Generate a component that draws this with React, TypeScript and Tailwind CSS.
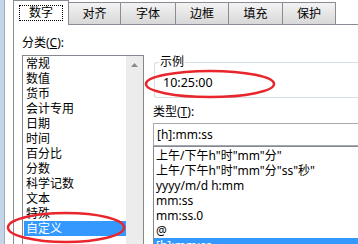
export default function App() {
  const tabs = [
    { label: "对齐", cls: "w-[52px]" },
    { label: "字体", cls: "w-[55px]" },
    { label: "边框", cls: "w-[53px]" },
    { label: "填充", cls: "w-[54px]" },
    { label: "保护", cls: "w-[53px]" },
  ];
  const cats = ["常规", "数值", "货币", "会计专用", "日期", "时间", "百分比", "分数", "科学记数", "文本", "特殊", "自定义"];
  const types = ['上午/下午h"时"mm"分"', '上午/下午h"时"mm"分"ss"秒"', "yyyy/m/d h:mm", "mm:ss", "mm:ss.0", "@", "[h]:mm:ss"];

  return (
    <div className="relative w-[358px] h-[244px] overflow-hidden bg-white text-[12px] text-black font-['Noto_Sans','Noto_Sans_CJK_SC',sans-serif] flex">
      <div className="w-[4px] shrink-0 bg-[#c4d5ea]" />
      <div className="w-px shrink-0 bg-[#a4abb6]" />
      <div className="w-[8px] shrink-0 bg-white" />
      <div className="flex-1 flex flex-col min-w-0">
        {/* tab row */}
        <div className="h-[25px] flex items-end shrink-0">
          <div className="w-[56px] h-[25px] shrink-0 bg-white border-l border-t border-r border-[#898c95] flex items-start justify-center pt-[4px]">
            <div className="border border-dotted border-black px-[9px] leading-[14px] h-[16px]">数字</div>
          </div>
          {tabs.map((t) => (
            <div
              key={t.label}
              className={`${t.cls} h-[23px] shrink-0 border-t border-r border-b border-[#898c95] bg-linear-to-b from-[#f3f3f3] to-[#d8d8d8] flex items-center justify-center leading-[14px]`}
            >
              {t.label}
            </div>
          ))}
          <div className="flex-1 h-[25px] border-b border-[#898c95]" />
        </div>
        {/* panel body */}
        <div className="flex-1 border-l border-[#898c95] pl-[8px] flex gap-[9px]">
          {/* left column */}
          <div className="w-[122px] shrink-0 flex flex-col">
            <div className="mt-[11px] leading-[14px] h-[14px]">
              分类(<span className="underline underline-offset-1">C</span>):
            </div>
            <div className="mt-[5px] h-[200px] border border-[#828790] flex">
              <div className="flex-1 flex flex-col pl-px">
                {cats.map((c) => (
                  <div
                    key={c}
                    className={
                      c === "自定义"
                        ? "h-[15px] leading-[15px] pl-[2px] bg-[#3399ff] text-white"
                        : "h-[15px] leading-[15px] pl-[2px]"
                    }
                  >
                    {c}
                  </div>
                ))}
              </div>
              <div className="w-[17px] shrink-0 bg-[#ececec] flex justify-center pt-[7px]">
                <svg width="7" height="4" viewBox="0 0 7 4">
                  <path d="M0 4 L3.5 0 L7 4 Z" fill="#8a8a8a" />
                </svg>
              </div>
            </div>
          </div>
          {/* right column */}
          <div className="flex-1 flex flex-col min-w-0">
            <div className="relative mt-[37px] ml-px h-[36px] border border-r-0 border-[#d5dfe5] rounded-l-[3px] pl-[8px] pt-[12px] text-[12.5px] leading-[16px]">
              <span className="absolute left-[4px] top-[-8px] bg-white px-px text-[12px] leading-[14px]">示例</span>
              10:25:00
            </div>
            <div className="mt-[7px] leading-[14px] h-[14px]">
              类型(<span className="underline underline-offset-1">T</span>):
            </div>
            <div className="mt-[4px] h-[23px] border border-r-0 border-[#a5a9b0] pl-[3px] leading-[21px]">[h]:mm:ss</div>
            <div className="h-[120px] border border-r-0 border-[#828790] pt-px">
              {types.map((t) => (
                <div
                  key={t}
                  className={
                    t === "[h]:mm:ss"
                      ? "h-[15px] leading-[15px] pl-[2px] bg-[#3399ff] text-white"
                      : "h-[15px] leading-[15px] pl-[2px] whitespace-nowrap"
                  }
                >
                  {t}
                </div>
              ))}
            </div>
          </div>
        </div>
      </div>
      <svg className="absolute left-0 top-0 pointer-events-none" width="358" height="244" viewBox="0 0 358 244">
        <ellipse cx="210" cy="84" rx="64" ry="13" fill="none" stroke="#e8262c" strokeWidth="2.5" />
        <ellipse cx="66" cy="227.5" rx="58" ry="14.5" fill="none" stroke="#e8262c" strokeWidth="2.5" />
      </svg>
    </div>
  );
}
